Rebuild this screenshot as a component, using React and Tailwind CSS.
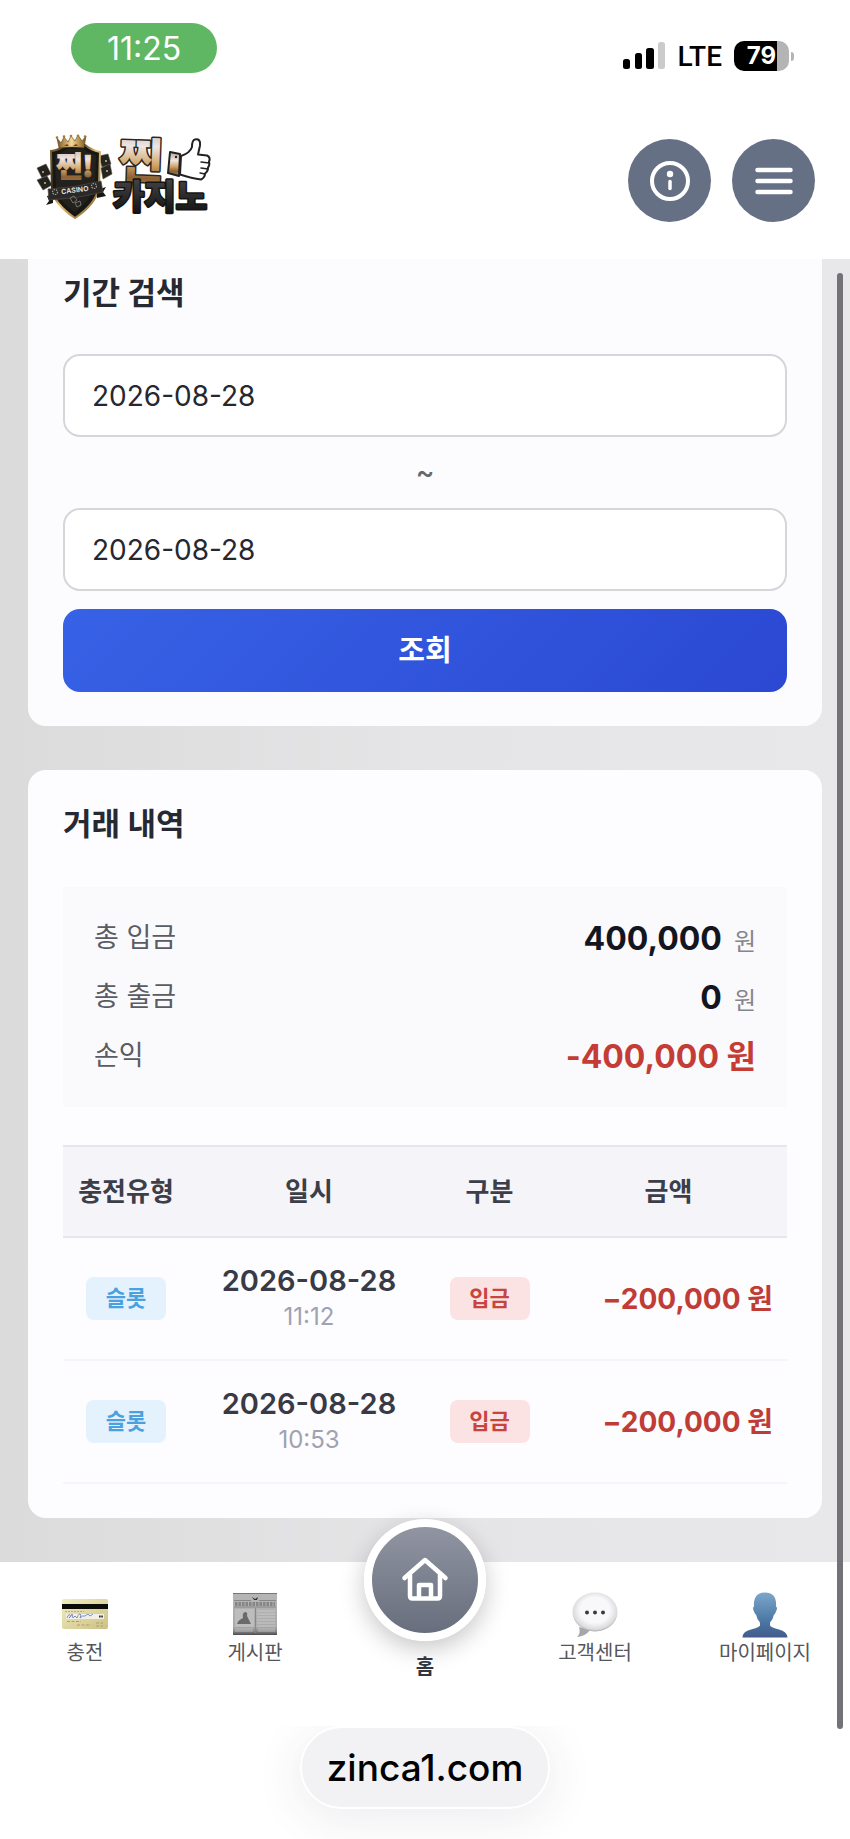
import { useState } from 'react'

const summary = [
  { label: '총 입금', value: '400,000' },
  { label: '총 출금', value: '0' },
]

const rows = [
  { id: 1, type: '슬롯', date: '2026-08-28', time: '11:12', kind: '입금', amount: '−200,000 원' },
  { id: 2, type: '슬롯', date: '2026-08-28', time: '10:53', kind: '입금', amount: '−200,000 원' },
]

function StatusBar() {
  return (
    <div className="flex h-[114px] items-start justify-between pt-[23px] pr-[56px] pl-[71px]">
      <span className="flex h-[50px] w-[146px] items-center justify-center rounded-full bg-[#5fb763] pt-[2px] text-[32px] text-white">
        11:25
      </span>
      <div className="mt-[18px] flex h-[30px] items-center">
        <svg width="42" height="28" viewBox="0 0 42 28" aria-hidden="true">
          <rect x="0" y="17" width="7" height="10" rx="2.5" />
          <rect x="12" y="11" width="7" height="16" rx="2.5" />
          <rect x="23" y="6" width="8" height="21" rx="2.5" />
          <rect x="35" y="0" width="7" height="27" rx="2.5" fill="#cbcbcb" />
        </svg>
        <span className="ml-3 pt-[2px] font-[Roboto,sans-serif] text-[28px] leading-none font-medium">LTE</span>
        <div className="ml-3 flex items-center gap-[2px]">
          <span className="flex h-[30px] w-[55px] items-center justify-center rounded-[10px] bg-linear-to-r from-black from-79% to-[#b4b4b4] to-79% text-[24px] font-bold text-white">
            79
          </span>
          <span className="h-[9px] w-[3px] rounded-r-full bg-[#b4b4b4]" />
        </div>
      </div>
    </div>
  )
}

function Logo() {
  return (
    <svg width="176" height="86" viewBox="0 0 176 86" role="img" aria-label="찐카지노" className="overflow-visible">
      <defs>
        <linearGradient id="gold" x1="0" y1="0" x2="0" y2="1">
          <stop offset="0" stopColor="#b9a795" />
          <stop offset="0.35" stopColor="#eee6e4" />
          <stop offset="0.6" stopColor="#d3a769" />
          <stop offset="0.8" stopColor="#8d6235" />
          <stop offset="1" stopColor="#a97c46" />
        </linearGradient>
        <linearGradient id="rim" x1="0" y1="0" x2="1" y2="1">
          <stop offset="0" stopColor="#8a6c35" />
          <stop offset="0.3" stopColor="#3a2e1c" />
          <stop offset="0.5" stopColor="#e2bf74" />
          <stop offset="1" stopColor="#7a5a24" />
        </linearGradient>
        <linearGradient id="crown" x1="0" y1="0" x2="1" y2="0">
          <stop offset="0" stopColor="#7b5419" />
          <stop offset="0.5" stopColor="#f1d797" />
          <stop offset="1" stopColor="#80571c" />
        </linearGradient>
        <linearGradient id="coal" x1="0" y1="0" x2="0" y2="1">
          <stop offset="0" stopColor="#505050" />
          <stop offset="1" stopColor="#0b0b0b" />
        </linearGradient>
      </defs>

      <g fill="#25231f" stroke="#54504a" strokeWidth="0.6">
        <path d="M1 34l9-4 5 10-9 4z" />
        <path d="M1 46l10-4 5 9-9 5z" />
        <path d="M63 22l9-2 3 10-9 3z" />
        <path d="M65 34l9-4 2 10-9 5z" />
      </g>
      <g fill="#d3bb85">
        <circle cx="7" cy="38" r="1" />
        <circle cx="9" cy="49" r="1" />
        <circle cx="70" cy="27" r="1" />
        <circle cx="71" cy="37" r="1" />
      </g>
      <path
        d="M15 17Q24 16 29 11h20q6 5 15 7l-1 35q-3 17-24 31Q18 70 16 55z"
        fill="#191713"
        stroke="url(#rim)"
        strokeWidth="2"
      />
      <path d="M19 21q8-2 12-6h16q5 4 13 6l-1 31q-4 14-20 26Q22 67 20 53z" fill="#23211e" />
      <path
        d="M21 4l4 5 3-6 4 5 3-6 4 5 3-6 4 6 4-5-2 12q-11-2-25 0z"
        fill="url(#crown)"
        stroke="#593b12"
        strokeWidth="0.6"
      />
      <g fill="#a77c36">
        <circle cx="21" cy="3.500" r="1.300" />
        <circle cx="28" cy="2.500" r="1.300" />
        <circle cx="35" cy="2" r="1.300" />
        <circle cx="42" cy="1.800" r="1.300" />
        <circle cx="49" cy="2.500" r="1.300" />
      </g>
      <path d="M28 12l3-2 2 2zM37 12l3-2 2 2z" fill="#9b2a1a" />
      <text
        x="39"
        y="43"
        textAnchor="middle"
        fontSize="28"
        fontWeight="900"
        fill="url(#gold)"
        stroke="url(#gold)"
        strokeWidth="1"
        fontFamily="'Noto Sans CJK KR', sans-serif"
      >
        찐!
      </text>
      <path d="M11 62l6-2v9l-7 2 3-4zM61 56l9-3-3 5 3 4-9 2z" fill="#161514" />
      <path d="M12 55q27-1 53-8l2 11q-26 7-54 8z" fill="#2a2927" stroke="#4f4b44" strokeWidth="0.700" />
      <g fill="none" stroke="#a7a39b" strokeWidth="1.200" strokeDasharray="1.500 1">
        <circle cx="19" cy="58" r="2.500" />
        <circle cx="58" cy="52" r="2.500" />
      </g>
      <text
        x="39"
        y="58.500"
        textAnchor="middle"
        fontSize="7"
        fontWeight="700"
        fill="#dedbd5"
        transform="rotate(-7 39 57)"
        fontFamily="Inter, sans-serif"
      >
        CASINO
      </text>
      <g fill="none" stroke="#77736b" strokeWidth="1">
        <path d="M34 64l4-2 3 4-4 3zM39 69l5-2 1 4-4 2z" />
      </g>

      <text
        x="105"
        y="44"
        textAnchor="middle"
        fontSize="48"
        fontWeight="900"
        fill="url(#gold)"
        stroke="#2a2521"
        strokeWidth="3"
        strokeLinejoin="round"
        paintOrder="stroke"
        transform="rotate(2 105 26)"
        fontFamily="'Noto Sans CJK KR', sans-serif"
      >
        찐
      </text>
      <text
        x="124"
        y="75"
        textAnchor="middle"
        fontSize="34"
        fontWeight="900"
        fill="url(#coal)"
        stroke="#141414"
        strokeWidth="3"
        strokeLinejoin="round"
        paintOrder="stroke"
        fontFamily="'Noto Sans CJK KR', sans-serif"
      >
        카지노
      </text>
      <path
        d="M145 22q9-3 11-9 0-7 3-7.500 6-1 5 6l-2 9 9 1q4 2 2 6 1 4-1 6 0 4-3 6 0 4-4 6-9-1-21-5z"
        fill="#fff"
        stroke="#222"
        strokeWidth="2"
        strokeLinejoin="round"
      />
      <path d="M165 28l8 1M165 34l7 1M164 39l5 1" stroke="#222" strokeWidth="1.500" strokeLinecap="round" />
      <path d="M134 18l10 2-1 22-11-3z" fill="url(#gold)" stroke="#222" strokeWidth="2" strokeLinejoin="round" />
      <circle cx="140" cy="23" r="1.200" fill="#222" />
    </svg>
  )
}

function Header() {
  return (
    <header className="flex h-[145px] items-start justify-between pt-5 pr-[35px] pl-9">
      <a href="#home">
        <Logo />
      </a>
      <div className="flex gap-[21px] pt-[5px]">
        <button
          type="button"
          aria-label="안내"
          className="flex size-[83px] items-center justify-center rounded-full bg-[#667085]"
        >
          <svg width="42" height="42" viewBox="0 0 42 42" fill="none" stroke="#fff" strokeLinecap="round">
            <circle cx="21" cy="21" r="18" strokeWidth="4" />
            <circle cx="21" cy="14" r="3.200" fill="#fff" stroke="none" />
            <path d="M21 21.500v7" strokeWidth="3.500" />
          </svg>
        </button>
        <button
          type="button"
          aria-label="메뉴"
          className="flex size-[83px] items-center justify-center rounded-full bg-[#667085]"
        >
          <svg width="42" height="42" viewBox="0 0 42 42" stroke="#fff" strokeWidth="4.500" strokeLinecap="round">
            <path d="M4.500 10h33M4.500 21h33M4.500 32h33" />
          </svg>
        </button>
      </div>
    </header>
  )
}

function DateField({ label, value, onChange }) {
  return (
    <input
      type="text"
      aria-label={label}
      value={value}
      onChange={(e) => onChange(e.target.value)}
      className="block h-[83px] w-full rounded-[17px] border-2 border-[#d5d6da] bg-white px-[27px] text-[28px] text-[#26272f]"
    />
  )
}

function PeriodSearch() {
  const [from, setFrom] = useState('2026-08-28')
  const [to, setTo] = useState('2026-08-28')

  return (
    <section className="rounded-b-[18px] bg-[#fcfcfe] px-[35px] pt-4 pb-[34px]">
      <h2 className="text-[31px] leading-9 font-bold text-[#262932]">기간 검색</h2>
      <form className="mt-[43px]" onSubmit={(e) => e.preventDefault()}>
        <DateField label="시작일" value={from} onChange={setFrom} />
        <div className="text-center text-[28px] leading-[71px] font-medium text-[#66686e]">~</div>
        <DateField label="종료일" value={to} onChange={setTo} />
        <button
          type="submit"
          className="mt-[18px] h-[83px] w-full rounded-[17px] bg-linear-[135deg] from-[#3762e6] to-[#2b48d2] text-[29px] font-bold text-white"
        >
          조회
        </button>
      </form>
    </section>
  )
}

function History() {
  return (
    <section className="mt-11 rounded-[18px] bg-[#fdfcfe] px-[35px] pt-9 pb-[34px]">
      <h2 className="text-[31px] leading-9 font-bold text-[#262932]">거래 내역</h2>

      <dl className="mt-[45px] bg-[#fafafd] px-[31px] pt-[22px] pb-[21px]">
        {summary.map((item) => (
          <div key={item.label} className="flex h-[59px] items-center justify-between">
            <dt className="text-[27px] text-[#5a5c64]">{item.label}</dt>
            <dd className="flex items-baseline gap-3">
              <span className="text-[32px] font-bold text-[#14161f]">{item.value}</span>
              <span className="text-[24px] text-[#85868b]">원</span>
            </dd>
          </div>
        ))}
        <div className="flex h-[59px] items-center justify-between">
          <dt className="text-[27px] text-[#5a5c64]">손익</dt>
          <dd className="text-[32px] font-bold text-[#c53c35]">-400,000 원</dd>
        </div>
      </dl>

      <table className="mt-[38px] w-full table-fixed border-collapse text-center">
        <colgroup>
          <col className="w-[126px]" />
          <col className="w-[240px]" />
          <col className="w-[121px]" />
          <col />
        </colgroup>
        <thead>
          <tr className="h-[91px] border-y-2 border-[#e6e6eb] bg-[#f4f4f9] text-[26px] text-[#3c3e49]">
            <th className="font-bold whitespace-nowrap">충전유형</th>
            <th className="font-bold">일시</th>
            <th className="font-bold">구분</th>
            <th className="font-bold">금액</th>
          </tr>
        </thead>
        <tbody>
          {rows.map((row) => (
            <tr key={row.id} className="h-[123px] border-b-2 border-[#f5f4f8]">
              <td>
                <span className="inline-flex h-[43px] w-20 items-center justify-center rounded-lg bg-[#e3f2fd] text-[22px] font-bold text-[#4ba0e0]">
                  {row.type}
                </span>
              </td>
              <td>
                <div className="text-[29px] leading-9 font-semibold text-[#383a45]">{row.date}</div>
                <div className="text-[24px] leading-9 text-[#9fa2b0]">{row.time}</div>
              </td>
              <td>
                <span className="inline-flex h-[43px] w-20 items-center justify-center rounded-lg bg-[#fbe3e3] text-[22px] font-bold text-[#c8443e]">
                  {row.kind}
                </span>
              </td>
              <td className="pr-[14px] text-right text-[28px] font-bold whitespace-nowrap text-[#c03c36]">
                {row.amount}
              </td>
            </tr>
          ))}
        </tbody>
      </table>
    </section>
  )
}

function CardIcon() {
  return (
    <svg width="46" height="44" viewBox="0 0 46 44" aria-hidden="true">
      <defs>
        <linearGradient id="card" x1="0" y1="0" x2="1" y2="1">
          <stop offset="0" stopColor="#f1edc0" />
          <stop offset="1" stopColor="#cdc184" />
        </linearGradient>
      </defs>
      <rect y="7" width="46" height="30" rx="2" fill="url(#card)" />
      <rect y="12" width="46" height="5" fill="#0b0b08" />
      <path d="M3 19.500h19" stroke="#b5ac7a" strokeDasharray="2 1" />
      <rect x="4" y="22" width="38" height="5" fill="#f3f1e6" />
      <path
        d="M5 26q2-5 3-3t-1 3q2-1 3-4l1 4 2-2 2 2q2-6 4-3l-1 3q3-3 5-2l3-2 2 2 3-2"
        fill="none"
        stroke="#6d86be"
        strokeWidth="0.900"
      />
      <path d="M37 24.500h4" stroke="#333" strokeWidth="2" strokeDasharray="1.700 0.500" />
      <path d="M5 29.500h14M15 33h14M34 31h7M34 34h7" stroke="#aaa06d" strokeDasharray="3 1.500" />
    </svg>
  )
}

function NewsIcon() {
  return (
    <svg width="46" height="44" viewBox="0 0 46 44" aria-hidden="true">
      <defs>
        <linearGradient id="paper" x1="0" y1="0" x2="0" y2="1">
          <stop offset="0" stopColor="#b6b6b6" />
          <stop offset="0.8" stopColor="#aaa" />
          <stop offset="0.900" stopColor="#8f8f8f" />
          <stop offset="1" stopColor="#4b4b4b" />
        </linearGradient>
      </defs>
      <rect x="1" y="1" width="44" height="42" fill="url(#paper)" />
      <path d="M1 1.500h44" stroke="#777" />
      <path d="M20 5l3 2 3-2-1 3h-3z" fill="#333" />
      <path d="M2 8.500h17M27 8.500h17M2 15h42" stroke="#888" />
      <path d="M3 12h40" stroke="#858585" strokeWidth="4" strokeDasharray="2.500 1" />
      <rect x="3" y="17" width="19" height="18" fill="#bdbdbd" />
      <path d="M13 20q3 0 2 4l4 8H5q1-4 6-6-1-5 2-6z" fill="#6a6a6a" />
      <path d="M25 19h18M25 22h18M25 25h18M25 28h18M25 31h18M25 34h18" stroke="#c9c9c9" />
      <path d="M23.500 16v25" stroke="#898989" />
      <path d="M3 37h18M26 37h17M3 39h18M26 39h17" stroke="#ccc" strokeWidth="0.700" />
    </svg>
  )
}

function ChatIcon() {
  return (
    <svg width="46" height="46" viewBox="0 0 46 46" aria-hidden="true">
      <defs>
        <radialGradient id="bubble" cx="0.5" cy="0.45" r="0.55">
          <stop offset="0.600" stopColor="#f8f7fa" />
          <stop offset="0.900" stopColor="#dbdadd" />
          <stop offset="1" stopColor="#aaa9ac" />
        </radialGradient>
      </defs>
      <path d="M7 35q2 6-2 10 9-1 13-7z" fill="#a7a6a8" />
      <ellipse cx="23" cy="20" rx="22.500" ry="19.500" fill="url(#bubble)" />
      <g fill="#3b3b3d">
        <circle cx="15" cy="20.500" r="2" />
        <circle cx="23" cy="20.500" r="2" />
        <circle cx="31" cy="20.500" r="2" />
      </g>
    </svg>
  )
}

function UserIcon() {
  return (
    <svg width="46" height="46" viewBox="0 0 46 46" aria-hidden="true">
      <defs>
        <linearGradient id="user" x1="0" y1="0" x2="0" y2="1">
          <stop offset="0" stopColor="#7da6ca" />
          <stop offset="0.600" stopColor="#4d7aa7" />
          <stop offset="1" stopColor="#415b8c" />
        </linearGradient>
      </defs>
      <path
        d="M23 0.500q12 0 11 14 2 1 0 5-1 3-2 3-1 5-4 8v3q1 2 9 4 8 2 8.500 8H0.500q0-6 8.500-8 8-2 9-4v-3q-3-3-4-8-1 0-2-3-2-4 0-5-1-14 11-14z"
        fill="url(#user)"
      />
    </svg>
  )
}

function NavItem({ href, label, icon }) {
  return (
    <a href={href} className="flex flex-1 flex-col items-center pt-[30px] text-[20px] leading-7 text-[#55565c]">
      <span className="flex h-[47px] items-start">{icon}</span>
      {label}
    </a>
  )
}

function BottomNav() {
  return (
    <nav className="relative flex h-[164px] bg-white">
      <NavItem href="#charge" label="충전" icon={<CardIcon />} />
      <NavItem href="#board" label="게시판" icon={<NewsIcon />} />
      <a
        href="#home"
        className="-mt-[43px] flex flex-1 flex-col items-center text-[20px] leading-7 font-bold text-[#33363f]"
      >
        <span className="mb-3 flex size-[122px] items-center justify-center rounded-full border-8 border-white bg-linear-to-b from-[#9195a2] to-[#686e7d] shadow-[0_8px_24px_rgba(0,0,0,0.22)]">
          <svg
            width="48"
            height="48"
            viewBox="0 0 48 48"
            fill="none"
            stroke="#fff"
            strokeWidth="4.500"
            strokeLinecap="round"
            strokeLinejoin="round"
            aria-hidden="true"
          >
            <path d="M3.500 22L24 4l20.500 18" />
            <path d="M9 19v21q0 2.500 2.500 2.500h25q2.500 0 2.500-2.500V19" />
            <path d="M18 42V29h12v13" />
          </svg>
        </span>
        홈
      </a>
      <NavItem href="#support" label="고객센터" icon={<ChatIcon />} />
      <NavItem href="#mypage" label="마이페이지" icon={<UserIcon />} />
    </nav>
  )
}

function App() {
  return (
    <div className="relative min-h-screen overflow-hidden bg-white font-[Inter,'Noto_Sans_CJK_KR',sans-serif] text-black">
      <StatusBar />
      <Header />
      <main className="bg-linear-to-r from-[#dbdbdb] via-[#e5e5e7] to-[#e8e7ea] px-7 pb-11">
        <PeriodSearch />
        <History />
      </main>
      <BottomNav />
      <div className="flex justify-center pb-[30px]">
        <a
          href="https://zinca1.com"
          className="flex h-[83px] w-[250px] items-center justify-center rounded-full border-2 border-white bg-[#f2f2f4] text-[37px] font-medium shadow-[0_8px_48px_rgba(60,50,80,0.1)]"
        >
          zinca1.com
        </a>
      </div>
      <div className="absolute top-[273px] right-[7px] bottom-[110px] w-[6px] rounded-full bg-[#737377]" />
    </div>
  )
}

export default App
